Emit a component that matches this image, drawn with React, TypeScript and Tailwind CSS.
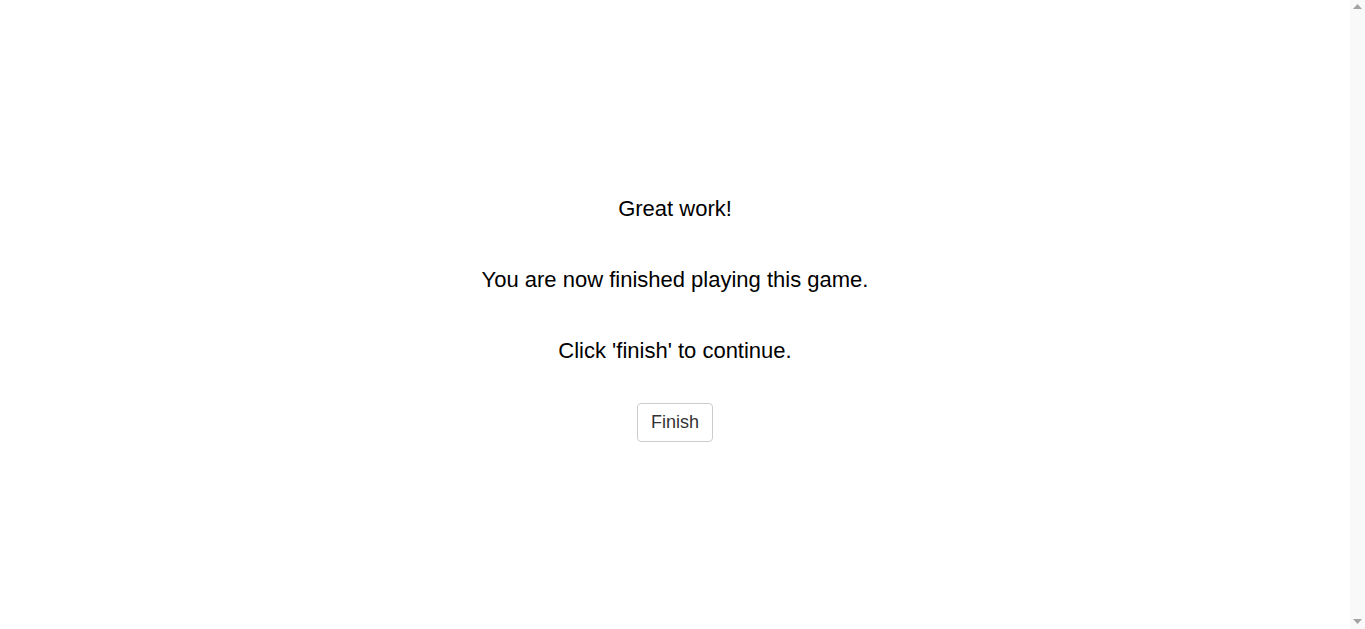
const App = () => {
  return (
    <div className="flex h-screen bg-white font-['Liberation_Sans',Arial,sans-serif] text-black">
      <div className="flex flex-1 flex-col items-center pt-[195px] text-[22px] leading-[28px]">
        <p>Great work!</p>
        <p className="mt-[43px]">You are now finished playing this game.</p>
        <p className="mt-[42.5px]">Click 'finish' to continue.</p>
        <button
          type="button"
          className="mt-[38.5px] rounded-[4px] border border-[#ccc] bg-white px-[12.5px] py-[6px] text-[18px] leading-[25px] text-[#333]"
        >
          Finish
        </button>
      </div>
      {/* fake classic scrollbar gutter */}
      <div className="flex w-[15px] flex-col items-center justify-between bg-[#f9f9f9] py-[4px]">
        <svg width="9" height="6" viewBox="0 0 9 6">
          <path d="M4.5 0L9 5H0Z" fill="#a3a3a3" />
        </svg>
        <svg width="9" height="6" viewBox="0 0 9 6">
          <path d="M0 0H9L4.5 5Z" fill="#a3a3a3" />
        </svg>
      </div>
    </div>
  )
}

export default App
